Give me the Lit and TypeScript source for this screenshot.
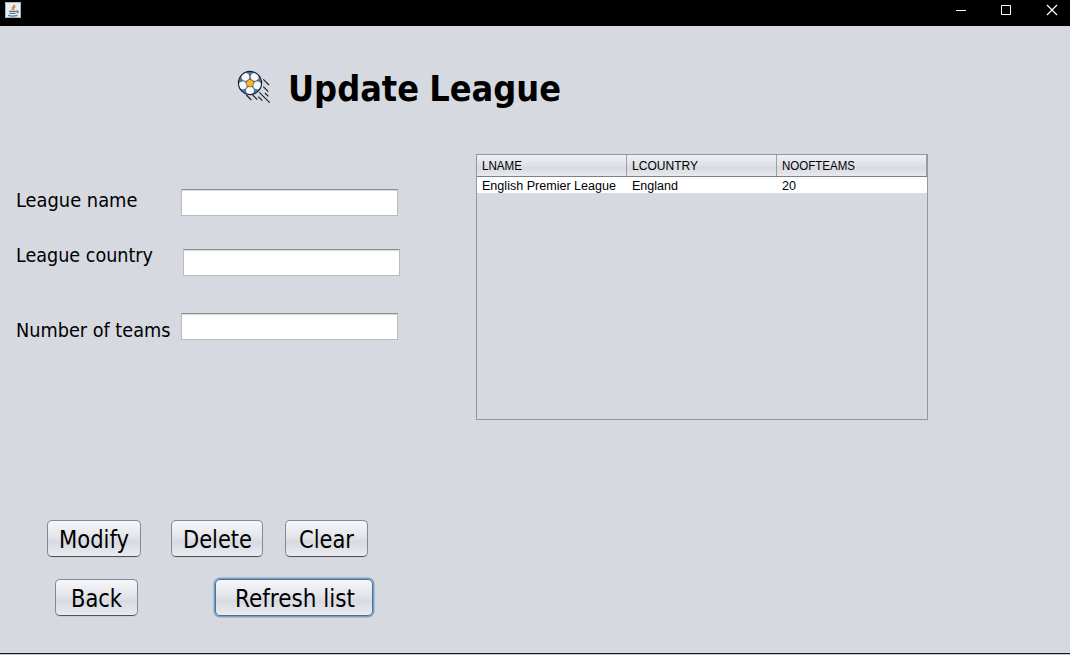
import { LitElement, html, svg, css } from "lit";
import { customElement, property } from "lit/decorators.js";

@customElement("fit-text")
class FitText extends LitElement {
  @property() text = "";
  @property({ type: Number }) width = 100;
  @property({ type: Number }) size = 20;

  static styles = css`
    :host { display: block; flex: none; }
    svg { display: block; overflow: visible; }
    text { fill: #000; font-family: "DejaVu Sans Condensed", "DejaVu Sans", sans-serif; font-stretch: condensed; }
    .bold { font-weight: 700; word-spacing: -1px; }
    .plain { font-family: "Liberation Sans", Arial, sans-serif; }
  `;

  render() {
    const face = this.size > 30 ? "bold" : this.size < 15 ? "plain" : "";
    return html`<svg width=${this.width} height=${this.size}>
      ${svg`<text class=${face} x="0" y=${this.size} font-size=${this.size} textLength=${this.width} lengthAdjust="spacingAndGlyphs">${this.text}</text>`}
    </svg>`;
  }
}

const label = (text: string, width: number, size: number) =>
  html`<fit-text .text=${text} .width=${width} .size=${size}></fit-text>`;

@customElement("app-root")
class AppRoot extends LitElement {
  static styles = css`
    :host { display: flex; flex-direction: column; width: 1070px; height: 655px; overflow: hidden; background: #d6d9e0; }
    * { box-sizing: border-box; }
    svg { display: block; flex: none; }
    .bar { height: 26px; flex: none; background: #000; display: flex; justify-content: space-between; }
    .java { margin: 2px 0 0 5px; }
    .main { flex: 1; display: flex; flex-direction: column; border-bottom: 1px solid #1a171b; }
    .end { height: 1px; background: #c9c6c9; flex: none; }
    .title { height: 128px; flex: none; display: flex; align-items: flex-start; padding: 39px 0 0 233px; }
    .title fit-text { margin: 0 0 0 15px; }
    .content { height: 366px; flex: none; display: flex; align-items: flex-start; }
    .form { width: 476px; padding-top: 33px; }
    .row { display: flex; align-items: flex-start; padding-left: 16px; }
    .name { width: 165px; flex: none; }
    .r1 { height: 55px; }
    .r2 { height: 66px; }
    .r3 { height: 40px; }
    .r1 .field { margin-top: 2px; }
    .r2 .field { margin: 7px 0 0 2px; }
    .r3 .field { margin-top: 5px; }
    .r3 .name { padding-top: 9px; }
    .field { width: 217px; height: 27px; background: #fff; border: 1px solid #b9bbc1; border-top-color: #8d8f95; box-shadow: inset 0 1px #d9dade; outline: none; padding: 0 6px; }
    .table { width: 452px; height: 266px; border: 1px solid #9297a1; }
    .head, .cells { display: grid; grid-template-columns: 150px 150px 150px; }
    .head { height: 22px; border-bottom: 1px solid #7d818c; background: linear-gradient(#f0f1f4, #dfe1e7 50%, #d7dae1 60%, #e8eaef); }
    .head > div { border-right: 1px solid #9b9fa9; padding: 3px 0 0 5px; }
    .cells { height: 16px; background: #fff; }
    .cells > div { padding: 1px 0 0 5px; }
    .buttons { display: flex; height: 59px; flex: none; }
    .first { padding-left: 47px; }
    .second { padding-left: 55px; }
    button { height: 37px; padding: 3px 0 0 11px; margin: 0; border: 1px solid #858993; border-bottom-color: #50535b; border-radius: 5px; background: linear-gradient(#f6f7f9, #e3e5ea 45%, #d7dae1 60%, #e9ebef); box-shadow: 0 1px #c9ccd3; display: flex; align-items: flex-start; flex: none; }
    .modify { width: 94px; margin-right: 30px; }
    .delete { width: 92px; margin-right: 22px; }
    .clear { width: 83px; padding-left: 12.5px; }
    .back { width: 83px; margin-right: 77px; padding-left: 14.5px; }
    .refresh { width: 158px; padding-left: 19px; border-color: #526f8b; box-shadow: 0 0 0 1.5px #78a2c7; }
  `;

  render() {
    return html`
      <header class="bar">
        <svg class="java" width="16" height="16" viewBox="0 0 16 16">
          <rect width="16" height="16" fill="#e8eff3" />
          <path d="M.5.5h15v15H.5z" fill="none" stroke="#9fb6c6" />
          <path d="M9.500 2.500C10 4 6 5 7.300 8M10.500 4.500C8 5.500 8.500 7 9 8" fill="none" stroke="#e4843b" stroke-width="1.4" />
          <path d="M4 9.300h7.500M4.500 11.300h6M11.500 9.200c2.500-.6 2 1.600.1 1.800M3 13.400c3 .8 7 .7 9.500-.1" fill="none" stroke="#527b95" stroke-width="1.3" />
        </svg>
        <svg width="120" height="26" viewBox="950 0 120 26" fill="none" stroke="#fff">
          <path d="M956 10.500h10M1001.500 5.500h9v9h-9z" />
          <path d="M1047 5l10 10M1057 5l-10 10" stroke-width="1.2" />
        </svg>
      </header>
      <main class="main">
        <div class="title">
          <svg width="40" height="40" viewBox="233 65 40 40">
            <defs><clipPath id="ball"><circle cx="250" cy="83" r="11.500" /></clipPath></defs>
            <circle cx="250" cy="83" r="11.500" fill="#2f7cc4" />
            <g clip-path="url(#ball)" fill="#f7f7fa" stroke="#2a3440" stroke-width=".5">
              <circle cx="245.400" cy="76.900" r="4.400" /><circle cx="254.600" cy="76.900" r="4.400" />
              <circle cx="257.200" cy="85.400" r="4.400" /><circle cx="250" cy="90.600" r="4.400" />
              <circle cx="242.800" cy="85.400" r="4.400" />
            </g>
            <path d="M250 78.900l4.100 3-1.500 4.800h-5.200l-1.500-4.800z" fill="#fbb62c" stroke="#4a3a1e" stroke-width=".5" />
            <circle cx="250" cy="83" r="11.600" fill="none" stroke="#16202b" stroke-width="1.1" />
            <path d="M263.300 79.300l5.700 5.700M263.300 86.700l5 5M265 93l3.300 3.300M259.300 92.300l10.400 10.400M252.300 94.700l5 5M258.300 96.700l4 4M246.300 95l5 5" fill="none" stroke="#20242a" stroke-width="1.2" />
          </svg>
          ${label("Update League", 273, 36)}
        </div>
        <div class="content">
          <div class="form">
            <div class="row r1"><div class="name">${label("League name", 121.5, 20)}</div><input class="field" /></div>
            <div class="row r2"><div class="name">${label("League country", 137, 20)}</div><input class="field" /></div>
            <div class="row r3"><div class="name">${label("Number of teams", 154.5, 20)}</div><input class="field" /></div>
          </div>
          <div class="table">
            <div class="head">
              <div>${label("LNAME", 40, 12)}</div><div>${label("LCOUNTRY", 66, 12)}</div><div>${label("NOOFTEAMS", 73, 12)}</div>
            </div>
            <div class="cells">
              <div>${label("English Premier League", 134, 12)}</div><div>${label("England", 46, 12)}</div><div>${label("20", 14, 12)}</div>
            </div>
          </div>
        </div>
        <div class="buttons first">
          <button class="modify">${label("Modify", 70, 24)}</button>
          <button class="delete">${label("Delete", 69, 24)}</button>
          <button class="clear">${label("Clear", 55, 24)}</button>
        </div>
        <div class="buttons second">
          <button class="back">${label("Back", 51, 24)}</button>
          <button class="refresh">${label("Refresh list", 120, 24)}</button>
        </div>
      </main>
      <div class="end"></div>
    `;
  }
}
